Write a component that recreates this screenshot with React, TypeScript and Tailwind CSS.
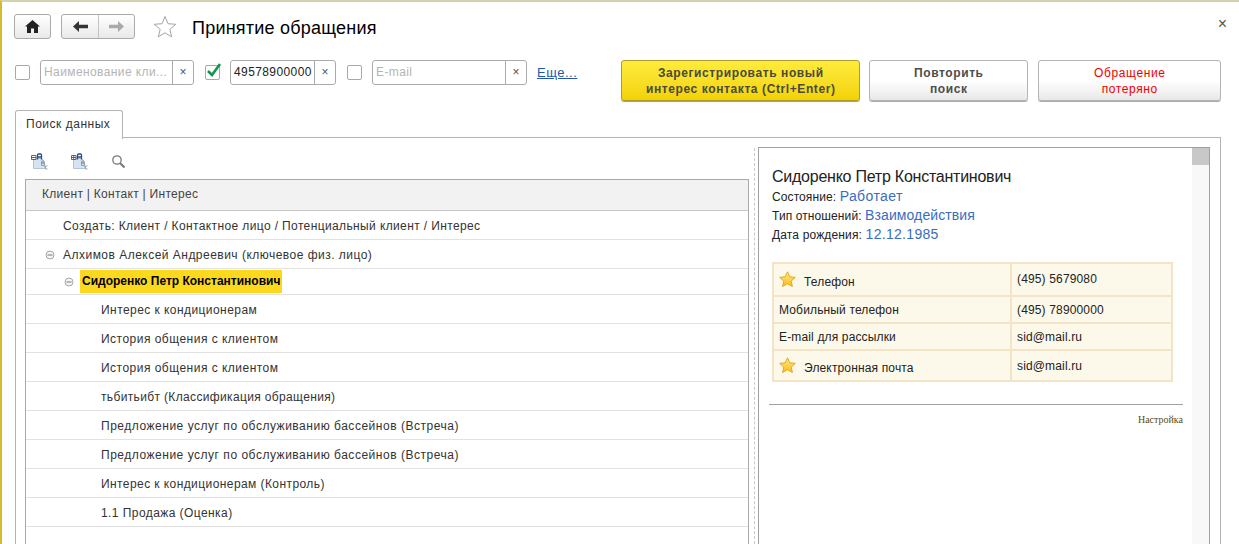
const treeRows = [
  { text: "Создать: Клиент / Контактное лицо / Потенциальный клиент / Интерес", h: "h-[29px]", level: 0, track: "tracking-[0.38px]" },
  { text: "Алхимов Алексей Андреевич (ключевое физ. лицо)", h: "h-[29px]", level: 1, track: "tracking-[0.48px]" },
  { text: "Сидоренко Петр Константинович", h: "h-[26px]", level: 2, track: "tracking-[0px]" },
  { text: "Интерес к кондиционерам", h: "h-[29px]", level: 3, track: "tracking-[0.44px]" },
  { text: "История общения с клиентом", h: "h-[29px]", level: 3, track: "tracking-[0.48px]" },
  { text: "История общения с клиентом", h: "h-[29px]", level: 3, track: "tracking-[0.48px]" },
  { text: "тьбитьибт (Классификация обращения)", h: "h-[29px]", level: 3, track: "tracking-[0.35px]" },
  { text: "Предложение услуг по обслуживанию бассейнов (Встреча)", h: "h-[29px]", level: 3, track: "tracking-[0.52px]" },
  { text: "Предложение услуг по обслуживанию бассейнов (Встреча)", h: "h-[29px]", level: 3, track: "tracking-[0.52px]" },
  { text: "Интерес к кондиционерам (Контроль)", h: "h-[29px]", level: 3, track: "tracking-[0.42px]" },
  { text: "1.1 Продажа (Оценка)", h: "h-[29px]", level: 3, track: "tracking-[0.43px]" },
];

const Collapse = () => (
  <svg width="10" height="10" viewBox="0 0 10 10" className="shrink-0">
    <circle cx="5" cy="5" r="4" fill="#f4f4f4" stroke="#a8a8a8" />
    <path d="M2.5 5h5" stroke="#777" />
  </svg>
);

const GoldStar = () => (
  <svg width="17" height="17" viewBox="0 0 17 17" className="shrink-0">
    <defs>
      <linearGradient id="gold" x1="0" y1="0" x2="0" y2="1">
        <stop offset="0" stopColor="#ffe88a" />
        <stop offset="1" stopColor="#f9bd1b" />
      </linearGradient>
    </defs>
    <path
      d="M8.5.8l2.300 5 5.500.6-4.100 3.700 1.200 5.400-4.900-2.800-4.900 2.800 1.200-5.400L.7 6.400l5.500-.6z"
      fill="url(#gold)"
      stroke="#e3a820"
      strokeLinejoin="round"
    />
  </svg>
);

const Check = ({ on }: { on?: boolean }) => (
  <div className="relative w-[15px] h-[15px] shrink-0 border border-[#a9a9a9] rounded-[2px] bg-white">
    {on && (
      <svg width="17" height="17" viewBox="0 0 17 17" className="absolute left-0 -top-[4px]">
        <path d="M2 9l4 4 8-11" fill="none" stroke="#12964a" strokeWidth="2.6" />
      </svg>
    )}
  </div>
);

const Field = ({
  width,
  value,
  placeholder,
}: {
  width: string;
  value?: string;
  placeholder?: string;
}) => (
  <div className={`flex h-[25px] ${width} shrink-0 border border-[#ababab] rounded-[3px] bg-white`}>
    <span
      className={`flex-1 min-w-0 overflow-hidden whitespace-nowrap pl-[3px] text-[12px] leading-[23px] tracking-[0.4px] ${value ? "text-[#222]" : "text-[#b4b4b4]"}`}
    >
      {value ?? placeholder}
    </span>
    <span className="w-[21px] shrink-0 border-l border-[#ababab] text-center text-[#555] text-[12px] leading-[23px]">
      ×
    </span>
  </div>
);

const ActionBtn = ({
  width,
  children,
  className,
}: {
  width: string;
  children: React.ReactNode;
  className: string;
}) => (
  <div
    className={`${width} h-[41px] shrink-0 flex flex-col items-center justify-center rounded-[3px] border text-[12px] leading-[16px] tracking-[0.6px] ${className}`}
  >
    {children}
  </div>
);

const DocIcon = ({ plus }: { plus?: boolean }) => (
  <svg width="17" height="17" viewBox="0 0 17 17">
    <path d="M2.500 5.500h8l3 3v7h-11z" fill="#d6e3f2" stroke="#b3c3d6" />
    <path d="M.5 2.500h4.500v4H.5zM.5 4.500h4.500" fill="#fff" stroke="#555" strokeWidth="0.9" />
    {plus && <path d="M2.700 2.500v4" stroke="#555" strokeWidth="0.9" />}
    <path d="M6.500 6.500V2q0-1 1-1h2q1 0 1 1v4.500M6.500 4h4" fill="none" stroke="#2a4f8f" strokeWidth="1.300" />
    <path d="M10.500 8h2.300v2h-2.300zM10.500 10h2.800v2.500h-2.800z" fill="none" stroke="#8a8a8a" strokeWidth="0.8" />
    <path d="M16.500 13h-2v3h2" fill="none" stroke="#8a8a8a" strokeWidth="0.8" />
  </svg>
);

export default function App() {
  return (
    <div className="w-[1239px] h-[544px] overflow-hidden bg-white flex flex-col border-l-2 border-l-[#d6b92c] border-t-2 border-t-[#d5d3ac] font-['Liberation_Sans',Arial,sans-serif] text-[12px]">
      {/* Title bar */}
      <div className="h-[56px] flex items-start pt-[12px] pl-[12px] pr-[12px] shrink-0">
        <div className="w-[37px] h-[25px] flex items-center justify-center rounded-[3px] border border-[#ababab] bg-gradient-to-b from-white to-[#e9e9e9]">
          <svg width="15" height="13" viewBox="0 0 15 13">
            <path d="M7.5 0L0 6.5h2V13h4V8.5h3V13h4V6.5h2z" fill="#222" />
          </svg>
        </div>
        <div className="ml-[10px] w-[74px] h-[25px] flex rounded-[3px] border border-[#ababab] bg-gradient-to-b from-white to-[#e9e9e9]">
          <div className="w-[37px] flex items-center justify-center border-r border-[#c4c4c4]">
            <svg width="15" height="11" viewBox="0 0 15 11">
              <path d="M6 0v3.8h9v3.4H6V11L0 5.5z" fill="#333" />
            </svg>
          </div>
          <div className="flex-1 flex items-center justify-center">
            <svg width="15" height="11" viewBox="0 0 15 11">
              <path d="M9 0v3.8H0v3.4h9V11l6-5.5z" fill="#a9a9a9" />
            </svg>
          </div>
        </div>
        <svg width="24" height="23" viewBox="0 0 24 23" className="ml-[18px] mt-[1px]">
          <path
            d="M12 1.5l3 7.2 7.8.6-6 5 1.9 7.6L12 17.8l-6.700 4.100 1.900-7.600-6-5 7.800-.6z"
            fill="#fff"
            stroke="#a5a5a5"
          />
        </svg>
        <h1 className="ml-[15px] mt-[1px] text-[18px] leading-[26px] tracking-[0.22px] text-black">Принятие обращения</h1>
        <span className="ml-auto mt-[2px] text-[16px] leading-[16px] text-[#555]">×</span>
      </div>

      {/* Filters and commands */}
      <div className="h-[50px] flex items-start pl-[13px] shrink-0 mt-[2px]">
        <div className="flex items-center h-[25px]">
          <Check />
          <div className="w-[10px]" />
          <Field width="w-[154px]" placeholder="Наименование кли..." />
          <div className="w-[11px]" />
          <Check on />
          <div className="w-[10px]" />
          <Field width="w-[106px]" value="49578900000" />
          <div className="w-[11px]" />
          <Check />
          <div className="w-[10px]" />
          <Field width="w-[155px]" placeholder="E-mail" />
          <a className="ml-[10px] text-[13px] tracking-[0.5px] text-[#1f57ad] underline">Еще...</a>
        </div>
        <ActionBtn
          width="w-[239px] ml-[44px]"
          className="border-[#b09a2a] bg-gradient-to-b from-[#ffec3a] to-[#f3d200] font-bold text-[#4a4a3a] shadow-[0_1px_0_#b8a53a]"
        >
          <span>Зарегистрировать новый</span>
          <span>интерес контакта (Ctrl+Enter)</span>
        </ActionBtn>
        <ActionBtn
          width="w-[159px] ml-[9px]"
          className="border-[#b4b4b4] bg-gradient-to-b from-white via-white to-[#e8e8e8] font-bold text-[#4d4d4d] shadow-[0_1px_0_#aaa]"
        >
          <span>Повторить</span>
          <span>поиск</span>
        </ActionBtn>
        <ActionBtn
          width="w-[183px] ml-[10px]"
          className="border-[#b4b4b4] bg-gradient-to-b from-white via-white to-[#e8e8e8] text-[#f00000] shadow-[0_1px_0_#aaa]"
        >
          <span>Обращение</span>
          <span>потеряно</span>
        </ActionBtn>
      </div>

      {/* Tabs */}
      <div className="ml-[13px] mr-[18px] flex-1 min-h-0 flex flex-col">
        <div className="flex h-[28px] shrink-0">
          <div className="w-[108px] border border-b-0 border-[#b4b4b4] rounded-t-[3px] pl-[10px] text-[12px] leading-[26px] tracking-[0.52px] text-[#333] bg-white relative z-10 h-[29px]">
            Поиск данных
          </div>
          <div className="flex-1 border-b border-[#b4b4b4]" />
        </div>

        <div className="flex-1 min-h-0 flex border-l border-r border-[#b4b4b4] pl-[9px] pr-[10px]">
          {/* Tree */}
          <div className="w-[724px] shrink-0 flex flex-col">
            <div className="h-[41px] shrink-0 flex items-center gap-[23px] pl-[6px] pt-[6px]">
              <DocIcon />
              <DocIcon plus />
              <svg width="16" height="16" viewBox="0 0 16 16">
                <circle cx="6" cy="6" r="4.200" fill="none" stroke="#777" strokeWidth="1.300" />
                <path d="M9.200 9.200l4.300 4.300" stroke="#777" strokeWidth="2" />
              </svg>
            </div>
            <div className="flex-1 min-h-0 border border-b-0 border-[#a9a9a9]">
              <div className="h-[31px] bg-[#f2f2f2] border-b border-[#c8c8c8] pl-[16px] leading-[29px] tracking-[0.28px] text-[#444]">
                Клиент | Контакт | Интерес
              </div>
              {treeRows.map((row, i) => (
                <div key={i} className={`${row.h} ${row.track} flex items-center border-b border-[#e2e2e2] text-[#333] ${row.level === 2 ? "" : "pt-[1px]"}`}>
                  {row.level === 0 && <span className="pl-[37px]">{row.text}</span>}
                  {row.level === 1 && (
                    <>
                      <span className="w-[18px] ml-[19px]"><Collapse /></span>
                      <span>{row.text}</span>
                    </>
                  )}
                  {row.level === 2 && (
                    <>
                      <span className="w-[16px] ml-[38px] mt-[1px]"><Collapse /></span>
                      <span className="h-[23px] bg-[#fcd91f] px-[2px] font-bold text-black leading-[23px]">{row.text}</span>
                    </>
                  )}
                  {row.level === 3 && <span className="pl-[75px]">{row.text}</span>}
                </div>
              ))}
            </div>
          </div>

          {/* Splitter */}
          <div className="w-[9px] shrink-0 flex justify-center pt-[10px] pl-[1px]">
            <div className="h-full border-l border-dashed border-[#c9c9c9]" />
          </div>

          {/* HTML preview */}
          <div className="flex-1 min-w-0 mt-[9px] flex border border-b-0 border-[#a0a0a0]">
            <div className="flex-1 min-w-0 flex flex-col pt-[19px] pl-[13px] pr-[9px]">
              <div className="text-[16px] leading-[19px] tracking-[-0.24px] text-[#222]">Сидоренко Петр Константинович</div>
              <div className="h-[19px] mt-[1px] leading-[19px] tracking-[0.1px] text-[#222]">
                Состояние: <span className="text-[14px] tracking-[0.4px] text-[#3a6cc0]">Работает</span>
              </div>
              <div className="h-[19px] leading-[19px] tracking-[0.1px] text-[#222]">
                Тип отношений: <span className="text-[14px] tracking-[0.1px] text-[#3a6cc0]">Взаимодействия</span>
              </div>
              <div className="h-[19px] leading-[19px] tracking-[0.15px] text-[#222]">
                Дата рождения: <span className="text-[14px] tracking-[0.3px] text-[#3a6cc0]">12.12.1985</span>
              </div>

              <div className="mt-[18px] w-[401px] border-2 border-[#f5e3c5] bg-[#f5e3c5] grid grid-cols-[236px_1fr] gap-[2px] tracking-[0.15px] text-[#222]">
                <div className="h-[31px] bg-[#fdf9ea] flex items-center pl-[5px] gap-[8px]">
                  <GoldStar />
                  <span className="mt-[4px]">Телефон</span>
                </div>
                <div className="h-[31px] bg-[#fdf9ea] flex items-center pl-[5px] pb-[1px]">(495) 5679080</div>
                <div className="h-[25px] bg-[#fdf9ea] flex items-center pl-[5px]">Мобильный телефон</div>
                <div className="h-[25px] bg-[#fdf9ea] flex items-center pl-[5px]">(495) 78900000</div>
                <div className="h-[25px] bg-[#fdf9ea] flex items-center pl-[5px]">E-mail для рассылки</div>
                <div className="h-[25px] bg-[#fdf9ea] flex items-center pl-[5px]">sid@mail.ru</div>
                <div className="h-[29px] bg-[#fdf9ea] flex items-center pl-[5px] gap-[8px]">
                  <GoldStar />
                  <span className="mt-[4px]">Электронная почта</span>
                </div>
                <div className="h-[29px] bg-[#fdf9ea] flex items-center pl-[5px]">sid@mail.ru</div>
              </div>

              <div className="mt-[22px] -ml-[3px] border-t border-[#a0a0a0]" />
              <div className="mt-[8px] text-right font-['Liberation_Serif',serif] text-[10px] leading-[13px] text-[#5c4a10]">
                Настройка
              </div>
            </div>
            <div className="w-[17px] shrink-0 bg-[#f8f8f8]">
              <div className="h-[17px] bg-[#c8c8c8]" />
            </div>
          </div>
        </div>
      </div>
    </div>
  );
}
